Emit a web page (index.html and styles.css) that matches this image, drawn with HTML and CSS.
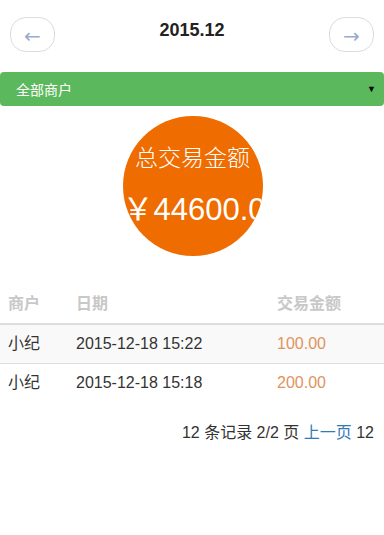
FILE: index.html
```html
<!DOCTYPE html>
<html>
<head>
<meta charset="utf-8">
<link rel="stylesheet" href="styles.css">
</head>
<body>
<div class="page">
  <div class="topbar">
    <button class="nav-btn">&larr;</button>
    <div class="month">2015.12</div>
    <button class="nav-btn">&rarr;</button>
  </div>
  <div class="select-bar">
    <span>全部商户</span>
    <span class="caret">▼</span>
  </div>
  <div class="circle-wrap">
    <div class="circle">
      <div class="circle-label">总交易金额</div>
      <div class="circle-amount">￥44600.0</div>
    </div>
  </div>
  <table class="records">
    <thead>
      <tr><th class="c1">商户</th><th class="c2">日期</th><th class="c3">交易金额</th></tr>
    </thead>
    <tbody>
      <tr class="odd"><td>小纪</td><td>2015-12-18 15:22</td><td class="amt">100.00</td></tr>
      <tr><td>小纪</td><td>2015-12-18 15:18</td><td class="amt">200.00</td></tr>
    </tbody>
  </table>
  <div class="pager">12 条记录 2/2 页 <a class="link">上一页</a> 12</div>
</div>
</body>
</html>
```
FILE: styles.css
```css
html, body {
  margin: 0;
  padding: 0;
  background: #fff;
}
body {
  font-family: "Liberation Sans", Arial, "Noto Sans CJK SC", sans-serif;
  color: #333;
  font-size: 16px;
}
.page {
  width: 384px;
}
.topbar {
  display: flex;
  align-items: center;
  justify-content: space-between;
  padding: 17px 10px 0 10px;
  height: 35px;
}
.nav-btn {
  width: 45px;
  height: 35px;
  border: 1px solid #dcdcdc;
  border-radius: 16px;
  background: #fff;
  color: #9aaccb;
  font-size: 20px;
  font-family: "DejaVu Sans", sans-serif;
  padding: 0;
  line-height: 1;
  padding-top: 2px;
}
.month {
  font-size: 18px;
  font-weight: bold;
  color: #222;
  margin-top: -8px;
}
.select-bar {
  margin-top: 20px;
  height: 34px;
  background: #5cb85c;
  border-radius: 4px;
  color: #fff;
  font-size: 14px;
  display: flex;
  align-items: center;
  justify-content: space-between;
  padding: 0 8px 0 16px;
  font-family: "Liberation Sans", "Noto Sans CJK SC", sans-serif;
}
.caret {
  color: #000;
  font-size: 9px;
}
.circle-wrap {
  display: flex;
  justify-content: center;
  margin-top: 10px;
  padding-left: 1px;
}
.circle {
  width: 140px;
  height: 140px;
  border-radius: 50%;
  background: #ef6c00;
  color: #fff;
  overflow: hidden;
  white-space: nowrap;
  text-align: center;
}
.circle-label {
  font-size: 23px;
  line-height: 30px;
  margin-top: 25px;
  font-family: "Noto Sans CJK SC", sans-serif;
  font-weight: 300;
}
.circle-amount {
  font-size: 31px;
  line-height: 36px;
  margin-top: 21px;
  text-align: left;
  padding-left: 0;
  font-family: "Liberation Sans", "Noto Sans CJK SC", sans-serif;
}
.records {
  margin-top: 29px;
  width: 100%;
  border-collapse: collapse;
  font-family: "Liberation Sans", "Noto Sans CJK SC", sans-serif;
}
.records th, .records td {
  padding: 8px;
  line-height: 22px;
  text-align: left;
  font-size: 16px;
}
.records th {
  color: #c8c8c8;
  font-weight: bold;
  border-bottom: 2px solid #ddd;
}
.records td {
  border-bottom: 1px solid #ddd;
  color: #333;
}
.records tbody tr:last-child td {
  border-bottom: none;
}
.records .c1 { width: 52px; }
.records .c2 { width: 185px; }
.odd td {
  background: #f9f9f9;
}
.records td.amt {
  color: #e0935e;
}
.pager {
  margin-top: 20px;
  text-align: right;
  padding-right: 10px;
  line-height: 22px;
  font-family: "Liberation Sans", "Noto Sans CJK SC", sans-serif;
  color: #333;
}
.link {
  color: #337ab7;
}
```
